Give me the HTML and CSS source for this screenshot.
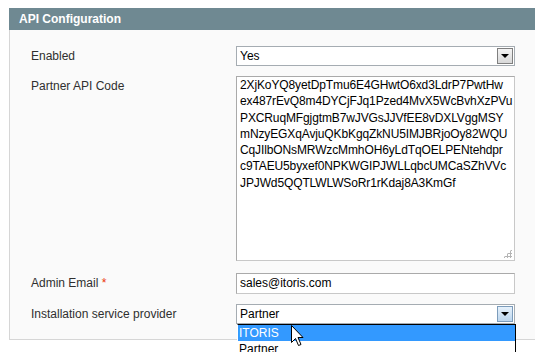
FILE: index.html
```html
<!DOCTYPE html>
<html lang="en">
<head>
    <meta charset="UTF-8">
    <title>API Configuration</title>
    <link rel="stylesheet" href="styles.css">
</head>
<body>
    <div class="page">
        <div class="entry-edit">
            <div class="entry-head">
                <h4>API Configuration</h4>
            </div>
            <div class="fieldset">
                <div class="row">
                    <label>Enabled</label>
                    <div class="select">
                        <span>Yes</span>
                        <span class="arrow"></span>
                    </div>
                </div>

                <div class="row">
                    <label>Partner API Code</label>
                    <div class="textarea">2XjKoYQ8yetDpTmu6E4GHwtO6xd3LdrP7PwtHw
ex487rEvQ8m4DYCjFJq1Pzed4MvX5WcBvhXzPVu
PXCRuqMFgjgtmB7wJVGsJJVfEE8vDXLVggMSY
mNzyEGXqAvjuQKbKgqZkNU5IMJBRjoOy82WQU
CqJIlbONsMRWzcMmhOH6yLdTqOELPENtehdpr
c9TAEU5byxef0NPKWGIPJWLLqbcUMCaSZhVVc
JPJWd5QQTLWLWSoRr1rKdaj8A3KmGf<span class="grip"></span></div>
                </div>

                <div class="row">
                    <label>Admin Email <span class="required">*</span></label>
                    <div class="input">sales@itoris.com</div>
                </div>

                <div class="row">
                    <label>Installation service provider</label>
                    <div class="select open">
                        <span>Partner</span>
                        <span class="arrow"></span>
                        <ul class="options">
                            <li class="selected">ITORIS</li>
                            <li>Partner</li>
                        </ul>
                    </div>
                </div>
            </div>
        </div>

        <svg class="cursor" width="14" height="24" viewBox="0 0 14 24">
            <path d="M1.5 1.5 L1.5 18.5 L5.5 14.5 L8.5 21.5 L11 20.5 L8 13.5 L13 13.5 Z" fill="#fff" stroke="#000" stroke-width="1"/>
        </svg>
    </div>
</body>
</html>
```

FILE: styles.css
```css
*{
    box-sizing: border-box;
}

body{
    margin: 0;
    background-color: #fff;
    font-family: "Liberation Sans", Arial, sans-serif;
    font-size: 12px;
    color: #2f2f2f;
    overflow: hidden;
}

.page{
    position: relative;
    padding: 8px 0 0 9px;
    height: 352px;
}

.entry-edit{
    margin-right: -30px;
}

.entry-head{
    background-color: #6f8992;
    height: 22px;
    padding: 0 10px;
}

.entry-head h4{
    margin: 0;
    color: #fff;
    font-size: 12px;
    font-weight: bold;
    line-height: 22px;
}

.fieldset{
    background-color: #fafafa;
    border: 1px solid #d6d6d6;
    border-top: none;
    padding: 16px 0 15px 21px;
}

.row{
    display: grid;
    grid-template-columns: 205px 279px;
    margin-bottom: 10px;
}

.row:nth-child(2){
    margin-bottom: 12px;
}

.row:last-child{
    margin-bottom: 0;
}

label{
    display: block;
    line-height: 20px;
}

.required{
    color: #eb340a;
}

.select,
.input,
.textarea{
    position: relative;
    background-color: #fff;
    border: 1px solid #aaa;
    border-color: #aaa #c8c8c8 #c8c8c8 #aaa;
    color: #000;
}

.select{
    height: 20px;
    line-height: 18px;
    padding-left: 3px;
    border-color: #a5acb2;
}

.select .arrow{
    position: absolute;
    top: 1px;
    right: 1px;
    width: 16px;
    height: 16px;
    border: 1px solid #7f7f7f;
    background: linear-gradient(#f4f4f4, #d8d8d8);
}

.select .arrow::after{
    content: "";
    position: absolute;
    left: 3px;
    top: 5px;
    border-left: 4px solid transparent;
    border-right: 4px solid transparent;
    border-top: 4px solid #000;
}

.select.open .arrow{
    border-color: #7c9cbb;
    background: linear-gradient(#e6f1fb, #bcd6ee);
}

.options{
    position: absolute;
    left: 0;
    top: 19px;
    width: 279px;
    margin: 0;
    padding: 0;
    list-style: none;
    background-color: #fff;
    border: 1px solid #000;
    border-left-color: #fff;
    line-height: 16px;
}

.options li{
    padding-left: 1px;
    color: #000;
}

.options li.selected{
    background-color: #3399ff;
    color: #fff;
}

.input{
    height: 21px;
    line-height: 19px;
    padding-left: 3px;
}

.textarea{
    height: 185px;
    padding: 0 2px 0 3px;
    line-height: 16.3px;
    letter-spacing: -0.12px;
    white-space: pre;
    overflow: hidden;
}

.grip{
    position: absolute;
    right: 2px;
    bottom: 2px;
    width: 9px;
    height: 9px;
    background:
        radial-gradient(circle, #b4b4b4 1px, transparent 1.2px) 0 0 / 3px 3px;
    clip-path: polygon(100% 0, 100% 100%, 0 100%);
}

.cursor{
    position: absolute;
    left: 290px;
    top: 324px;
}
```
